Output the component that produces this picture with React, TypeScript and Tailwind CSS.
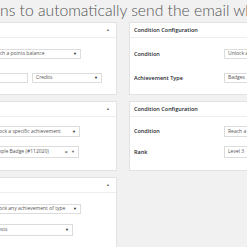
import React from "react";

function Select({ text, w, h = 10, clear = false }: { text: string; w: number; h?: number; clear?: boolean }) {
  return (
    <div
      className="flex items-center justify-between border border-[#dcdcdc] bg-white pl-[3px] pr-[3px] text-[5px] text-[#555] shrink-0 overflow-hidden whitespace-nowrap"
      style={{ width: w, height: h }}
    >
      <span>{text}</span>
      {clear ? (
        <span className="flex items-center gap-[3px] text-[#666]">
          <span className="text-[6px] font-bold">×</span>
          <span className="text-[4px]">▼</span>
        </span>
      ) : (
        <span className="text-[4px] text-[#222]">▼</span>
      )}
    </div>
  );
}

function Panel({ title, caret, children, bodyClass }: { title: string; caret?: boolean; children: React.ReactNode; bodyClass: string }) {
  return (
    <div className="w-[225px] shrink-0 border border-[#e2e2e2] bg-white">
      <div className="flex h-[15px] items-center justify-between border-b border-[#eeeeee] pl-[4px] pr-[6px]">
        <span className="text-[5.5px] font-semibold text-[#23282d]">{title}</span>
        {caret && <span className="text-[4px] text-[#777]">▲</span>}
      </div>
      <div className={bodyClass}>{children}</div>
    </div>
  );
}

function Row({ label, children }: { label: string; children: React.ReactNode }) {
  return (
    <div className="flex items-center">
      <div className="w-[90px] shrink-0 text-[5.5px] font-semibold text-[#23282d]">{label}</div>
      {children}
    </div>
  );
}

export default function App() {
  return (
    <div
      className="relative h-[247px] w-[247px] overflow-hidden bg-[#f1f1f1]"
      style={{ fontFamily: '"Open Sans", "Liberation Sans", sans-serif' }}
    >
      <div
        className="h-[22px] whitespace-nowrap pt-[2px] text-[15.7px] font-light leading-[16px] text-[#555]"
        style={{ fontFamily: 'Lato, "Open Sans", sans-serif' }}
      >
        ns to automatically send the email when
      </div>
      <div className="ml-[-108px] flex gap-[12px]">
        <div className="flex flex-col gap-[6px]">
          <Panel title="Condition Configuration" caret bodyClass="flex flex-col gap-[14px] pl-[4px] pt-[11px] pb-[11px]">
            <Row label="Condition">
              <Select text="Reach a points balance" w={94} />
            </Row>
            <Row label="Points">
              <div className="flex gap-[4px]">
                <div className="h-[10px] w-[41px] border border-[#dcdcdc] bg-white" />
                <Select text="Credits" w={70} />
              </div>
            </Row>
          </Panel>
          <Panel title="Condition Configuration" caret bodyClass="flex flex-col gap-[9px] pl-[4px] pt-[9px] pb-[12px]">
            <Row label="Condition">
              <Select text="Unlock a specific achievement" w={93} h={11} />
            </Row>
            <Row label="Achievement">
              <Select text="Sample Badge (#112020)" w={92} h={12} clear />
            </Row>
          </Panel>
          <Panel title="Condition Configuration" caret bodyClass="flex flex-col gap-[10px] pl-[4px] pt-[11px] pb-[11px]">
            <Row label="Condition">
              <Select text="Unlock any achievement of type" w={94} />
            </Row>
            <Row label="Achievement Type">
              <Select text="Quests" w={86} h={12} />
            </Row>
          </Panel>
        </div>
        <div className="flex flex-col gap-[6px]">
          <Panel title="Condition Configuration" bodyClass="flex flex-col gap-[14px] pl-[4px] pt-[11px] pb-[11px]">
            <Row label="Condition">
              <Select text="Unlock a specific achievement" w={94} />
            </Row>
            <Row label="Achievement Type">
              <Select text="Badges" w={94} />
            </Row>
          </Panel>
          <Panel title="Condition Configuration" bodyClass="flex flex-col gap-[9px] pl-[4px] pt-[9px] pb-[12px]">
            <Row label="Condition">
              <Select text="Reach a rank" w={94} h={11} />
            </Row>
            <Row label="Rank">
              <Select text="Level 3" w={94} h={12} />
            </Row>
          </Panel>
        </div>
      </div>
    </div>
  );
}
